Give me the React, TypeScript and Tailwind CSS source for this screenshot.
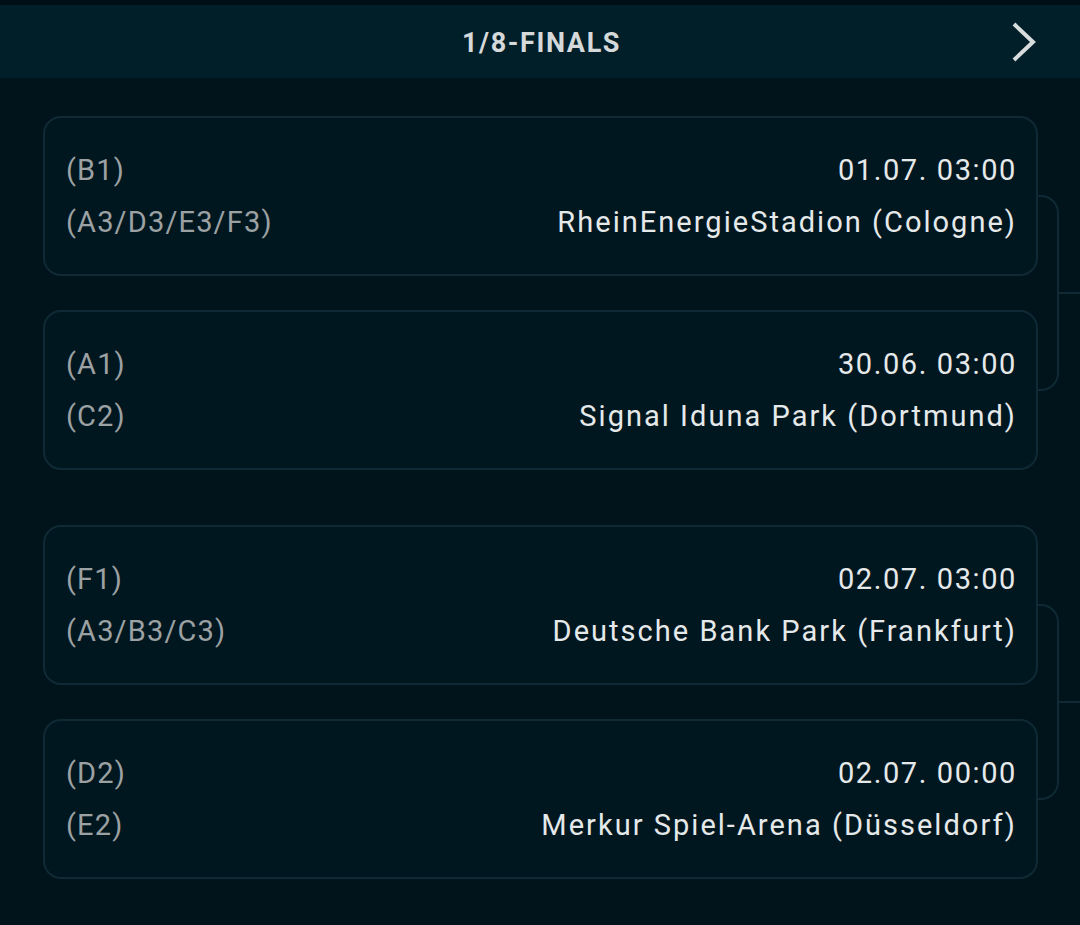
const groups = [
  [
    { home: "(B1)", away: "(A3/D3/E3/F3)", date: "01.07. 03:00", venue: "RheinEnergieStadion (Cologne)" },
    { home: "(A1)", away: "(C2)", date: "30.06. 03:00", venue: "Signal Iduna Park (Dortmund)" },
  ],
  [
    { home: "(F1)", away: "(A3/B3/C3)", date: "02.07. 03:00", venue: "Deutsche Bank Park (Frankfurt)" },
    { home: "(D2)", away: "(E2)", date: "02.07. 00:00", venue: "Merkur Spiel-Arena (Düsseldorf)" },
  ],
];

type Match = { home: string; away: string; date: string; venue: string };

function MatchCard({ m }: { m: Match }) {
  return (
    <div className="h-[160px] rounded-[18px] border-2 border-[#0f2a34] bg-[#011720] pl-[21px] pr-[19px] flex flex-col justify-center gap-[16px] text-[29px] leading-[36px] font-['Roboto',sans-serif]">
      <div className="flex justify-between items-center">
        <span className="text-[#9ca1a3] tracking-[0.04em]">{m.home}</span>
        <span className="text-[#e6e9ea] tracking-[0.055em]">{m.date}</span>
      </div>
      <div className="flex justify-between items-center">
        <span className="text-[#9ca1a3] tracking-[0.04em]">{m.away}</span>
        <span className="text-[#e6e9ea] tracking-[0.07em]">{m.venue}</span>
      </div>
    </div>
  );
}

export default function App() {
  return (
    <div className="w-[1080px] h-[925px] bg-[#01141c] font-['Roboto',sans-serif] overflow-hidden">
      {/* top strip */}
      <div className="h-[5px] bg-[#000f15]" />

      {/* header */}
      <div className="h-[73px] bg-[#011f29] grid grid-cols-[1fr_auto_1fr] items-center">
        <div />
        <span className="text-[27px] font-bold tracking-[0.06em] text-[#d5d9da] pt-[3px] pl-[3px]">1/8-FINALS</span>
        <div className="flex justify-end pr-[44px]">
          <svg width="24" height="40" viewBox="0 0 24 40" fill="none">
            <path d="M2 2 L21 20 L2 38" stroke="#d8dcdd" strokeWidth="4" strokeLinejoin="miter" />
          </svg>
        </div>
      </div>

      {/* bracket */}
      <div className="pt-[38px] pl-[43px] flex flex-col gap-[55px]">
        {groups.map((g, i) => (
          <div key={i} className="flex">
            <div className="flex-1 flex flex-col gap-[34px]">
              {g.map((m) => (
                <MatchCard key={m.venue} m={m} />
              ))}
            </div>
            <div className="w-[42px] relative">
              <div className="absolute top-[79px] bottom-[79px] left-0 w-[21px] border-2 border-l-0 border-[#0f2a34] rounded-r-[18px]" />
              <div className="absolute top-1/2 -mt-px left-[21px] right-0 h-[2px] bg-[#0f2a34]" />
            </div>
          </div>
        ))}
      </div>
    </div>
  );
}
